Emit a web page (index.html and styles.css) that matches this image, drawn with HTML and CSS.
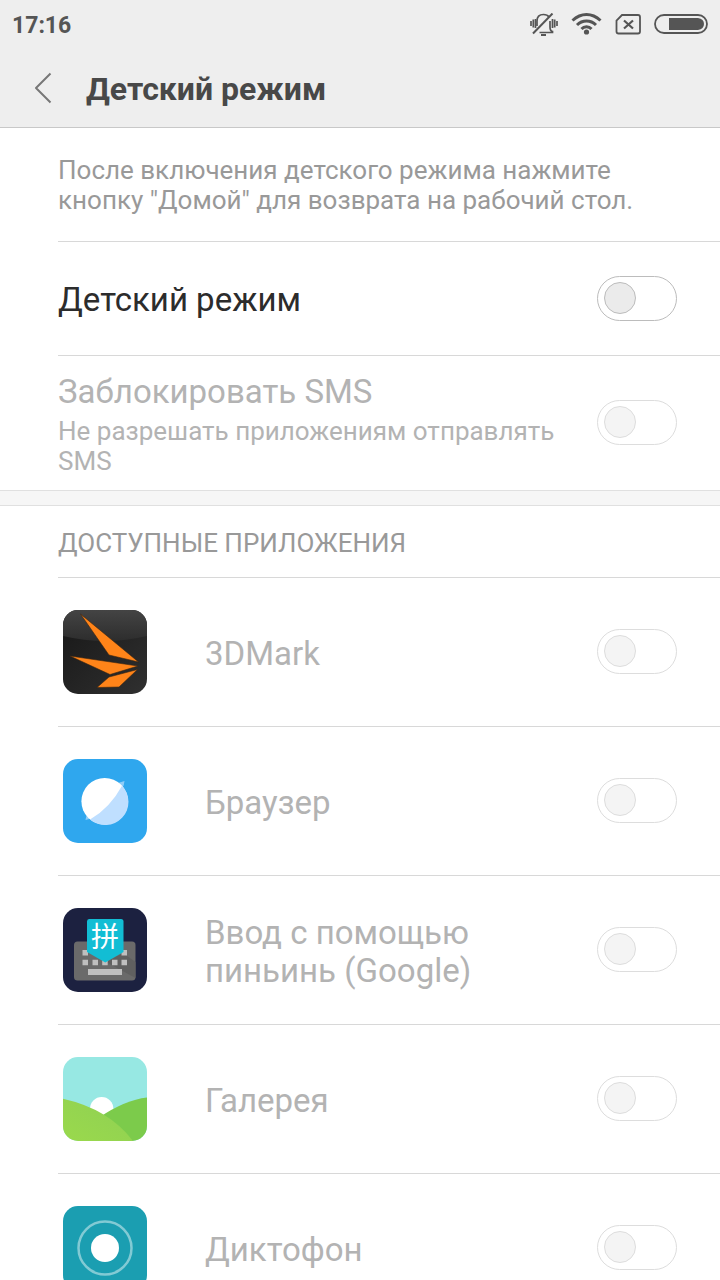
FILE: index.html
```html
<!DOCTYPE html>
<html lang="ru">
<head>
<meta charset="utf-8">
<meta name="viewport" content="width=device-width, initial-scale=1">
<title>Детский режим</title>
<link rel="stylesheet" href="styles.css">
</head>
<body>
<div class="screen">
  <header class="header">
    <div class="status">
      <time class="clock">17:16</time>
      <div class="indicators">
        <svg width="30" height="24" viewBox="0 0 30 24" fill="none" stroke="#555" stroke-width="1.700" aria-hidden="true">
          <path d="M9 13V8C9 4 11.500 1.500 15.500 1.500C18 1.500 20 2.500 21 4M22 8V14Q22 18 24.500 18.500V19.500H11.500"/>
          <path d="M5 20.500L24.500 .5" stroke-width="2"/>
          <path d="M3 8V13M5.300 6.500V14.500M7.500 6V15M24.500 6V15M26.700 6.500V14.500M29 8V13" stroke-width="1.700"/>
          <path d="M13 22H18" stroke-width="2"/>
        </svg>
        <svg width="31" height="24" viewBox="0 0 31 24" fill="none" stroke="#555" stroke-width="3" aria-hidden="true">
          <path d="M1.500 7.500Q8 1.500 15.500 1.500T29.500 7.500M6 12Q10 8 15.500 8T25 12M10.500 16Q12.500 13.800 15.500 13.800T20.500 16"/>
          <circle cx="15.500" cy="19" r="2.600" fill="#555" stroke="none"/>
        </svg>
        <svg width="26" height="24" viewBox="0 0 26 24" fill="none" stroke="#555" stroke-width="1.800" aria-hidden="true">
          <path d="M7 2H23Q25 2 25 4V18.500Q25 20.500 23 20.500H3.500Q1.500 20.500 1.500 18.500V7.500Z"/>
          <path d="M9 7.500L18 15.500M18 7.500L9 15.500" stroke-width="2.200"/>
        </svg>
        <svg width="54" height="24" viewBox="0 0 54 24" aria-hidden="true">
          <rect x="1" y="2" width="52" height="18" rx="9" fill="none" stroke="#555" stroke-width="1.800"/>
          <path d="M15 5H44Q50 6 50 11T44 17H15Z" fill="#555"/>
        </svg>
      </div>
    </div>
    <div class="titlebar">
      <button class="back" type="button" aria-label="Назад">
        <svg width="18" height="32" viewBox="0 0 18 32" fill="none" stroke="#777" stroke-width="2" stroke-linejoin="round" aria-hidden="true"><path d="M16.500 1.500L2 16L16.500 30.500"/></svg>
      </button>
      <h1 class="title">Детский режим</h1>
    </div>
  </header>

  <main class="content">
    <section class="group">
      <p class="intro">После включения детского режима нажмите кнопку "Домой" для возврата на рабочий стол.</p>
      <label class="row row-mode">
        <span class="name">Детский режим</span>
        <input class="toggle" type="checkbox">
      </label>
      <label class="row disabled">
        <span class="text">
          <span class="name">Заблокировать SMS</span>
          <span class="note">Не разрешать приложениям отправлять SMS</span>
        </span>
        <input class="toggle" type="checkbox" disabled>
      </label>
    </section>
    <div class="divider"></div>
    <section class="group">
      <h2 class="caption">ДОСТУПНЫЕ ПРИЛОЖЕНИЯ</h2>
      <label class="row row-app disabled">
        <svg class="icon" viewBox="0 0 84 84" aria-hidden="true">
          <defs>
            <linearGradient id="dark" x1="0" y1="0" x2="1" y2="1"><stop offset="0" stop-color="#171717"/><stop offset="1" stop-color="#303030"/></linearGradient>
            <linearGradient id="gloss" x1="0" y1="0" x2="0" y2="1"><stop offset="0" stop-color="#444"/><stop offset="1" stop-color="#2d2d2d"/></linearGradient>
          </defs>
          <rect width="84" height="84" fill="url(#dark)"/>
          <path d="M0 0H84V26Q42 36 0 26Z" fill="url(#gloss)"/>
          <path d="M17.500 4L75.500 52L46 45ZM7 46L75 56L47 64.500ZM34 77.500L46 67L74.500 59.500L56 77Z" fill="#ff8419" stroke="#3d2612" stroke-width=".6"/>
        </svg>
        <span class="name">3DMark</span>
        <input class="toggle" type="checkbox" disabled>
      </label>
      <label class="row row-app disabled">
        <svg class="icon" viewBox="0 0 84 84" aria-hidden="true">
          <rect width="84" height="84" fill="#2fa7ee"/>
          <path d="M22.500 61L24 54L55 24L61.500 22Q61.500 25 59 30L30 59Z" fill="#8fcdf8"/>
          <circle cx="41.700" cy="42.300" r="23.300" fill="#fff"/>
          <path d="M59 26.700A23.300 23.300 0 0 1 27 60.500Q47 49 59 26.700Z" fill="#bfdfff"/>
        </svg>
        <span class="name">Браузер</span>
        <input class="toggle" type="checkbox" disabled>
      </label>
      <label class="row row-app disabled">
        <svg class="icon" viewBox="0 0 84 84" aria-hidden="true">
          <rect width="84" height="84" fill="#1c2140"/>
          <rect x="11" y="33.500" width="61.500" height="39" rx="3.500" fill="#6a6a6a"/>
          <path d="M43 54L60 45L72.500 54V70Z" fill="#606060"/>
          <path d="M19.500 42h5.500v5.500h-5.500zM58.500 42h5.500v5.500h-5.500zM19.500 51.800h5.500v5.500h-5.500zM29.500 51.800h5.500v5.500h-5.500zM39.200 51.800h5.500v5.500h-5.500zM49 51.800h5.500v5.500h-5.500zM58.500 51.800h5.500v5.500h-5.500zM25 61h34v6h-34z" fill="#bfbfbf"/>
          <path d="M26 11H58Q60.500 11 60.500 13.500V44L42.300 54.500L24 44V13.500Q24 11 26 11Z" fill="#12bdd4"/>
          <text class="glyph" x="42" y="39" text-anchor="middle">拼</text>
        </svg>
        <span class="name">Ввод с помощью пиньинь (Google)</span>
        <input class="toggle" type="checkbox" disabled>
      </label>
      <label class="row row-app disabled">
        <svg class="icon" viewBox="0 0 84 84" aria-hidden="true">
          <defs><linearGradient id="hill" x1="0" y1="1" x2="1" y2="0"><stop offset="0" stop-color="#9ad94c"/><stop offset="1" stop-color="#8fd054"/></linearGradient></defs>
          <rect width="84" height="84" fill="#97e8e3"/>
          <circle cx="38.700" cy="51.800" r="11.700" fill="#fff"/>
          <path d="M84 40.500Q62 43 36 60.500L60 84H84Z" fill="#7ccb4b"/>
          <path d="M0 41.700Q46 52 70 84H0Z" fill="url(#hill)"/>
        </svg>
        <span class="name">Галерея</span>
        <input class="toggle" type="checkbox" disabled>
      </label>
      <label class="row row-app disabled">
        <svg class="icon" viewBox="0 0 84 84" aria-hidden="true">
          <rect width="84" height="84" fill="#1b9eb1"/>
          <circle cx="42" cy="42" r="26.500" fill="none" stroke="#82cad4" stroke-width="2.500"/>
          <circle cx="42" cy="42" r="14" fill="#fff"/>
        </svg>
        <span class="name">Диктофон</span>
        <input class="toggle" type="checkbox" disabled>
      </label>
    </section>
  </main>
</div>
</body>
</html>
```
FILE: styles.css
```css
* { box-sizing: border-box; }

body {
  margin: 0;
  background: #fff;
  color: #2c2c2c;
  font-family: Roboto, "Noto Sans", sans-serif;
}

.screen {
  display: flex;
  flex-direction: column;
  height: 100vh;
}

.header {
  flex: none;
  background: #eee;
  border-bottom: 1px solid #c8c8c8;
}

.status {
  display: flex;
  align-items: center;
  justify-content: space-between;
  height: 49px;
  padding: 0 12px;
}

.clock {
  padding-top: 2px;
  color: #555;
  font-size: 23px;
  font-weight: 700;
  line-height: 28px;
}

.indicators {
  display: flex;
  gap: 13px;
}

.indicators svg { display: block; }

.titlebar {
  display: flex;
  align-items: center;
  gap: 34px;
  height: 78px;
  padding: 0 34px;
}

.back {
  display: flex;
  padding: 0;
  border: 0;
  background: none;
}

.title {
  margin: 0;
  padding-top: 1px;
  color: #484848;
  font-size: 32px;
  font-weight: 700;
  line-height: 38px;
}

.content {
  flex: 1;
  min-height: 0;
  overflow-y: auto;
  scrollbar-width: none;
}

.group { padding-left: 58px; }

.divider {
  height: 16px;
  border: solid #e0e0e0;
  border-width: 1px 0;
  background: #f6f6f6;
}

.intro {
  margin: 0;
  padding: 27px 43px 26px 0;
  color: #999;
  font-size: 26px;
  line-height: 30px;
}

.row {
  display: flex;
  align-items: center;
  justify-content: space-between;
  padding-right: 43px;
  border-top: 1px solid #d8d8d8;
}

.row-mode { min-height: 114px; }

.row-app { min-height: 149px; }

.text {
  flex: 1;
  padding: 17px 0 14px;
}

.name {
  display: block;
  flex: 1;
  font-size: 33px;
  line-height: 38px;
}

.row-mode .name { padding-top: 2px; }

.row-app .name { padding: 3px 60px 0 58px; }

.note {
  display: block;
  padding-top: 5px;
  font-size: 26px;
  line-height: 30px;
}

.disabled { color: #b3b3b3; }

.icon {
  flex: none;
  width: 84px;
  height: 84px;
  margin-left: 5px;
  border-radius: 15px;
}

.glyph {
  fill: #fff;
  font-family: "Noto Sans CJK SC", sans-serif;
  font-size: 28px;
}

.toggle {
  flex: none;
  width: 80px;
  height: 45px;
  margin: 0;
  padding: 5px 6px;
  appearance: none;
  border: 1px solid #bcbcbc;
  border-radius: 23px;
  background: #fff;
}

.toggle::before {
  display: block;
  width: 30px;
  height: 30px;
  border: 1px solid #bcbcbc;
  border-radius: 50%;
  background: #ebebeb;
  content: "";
}

.toggle:checked::before { margin-left: auto; }

.toggle:disabled {
  margin-bottom: 2px;
  opacity: 0.5;
}

.caption {
  margin: 0;
  padding: 22px 0 19px;
  color: #999;
  font-size: 26px;
  font-weight: 400;
  line-height: 30px;
}
```
